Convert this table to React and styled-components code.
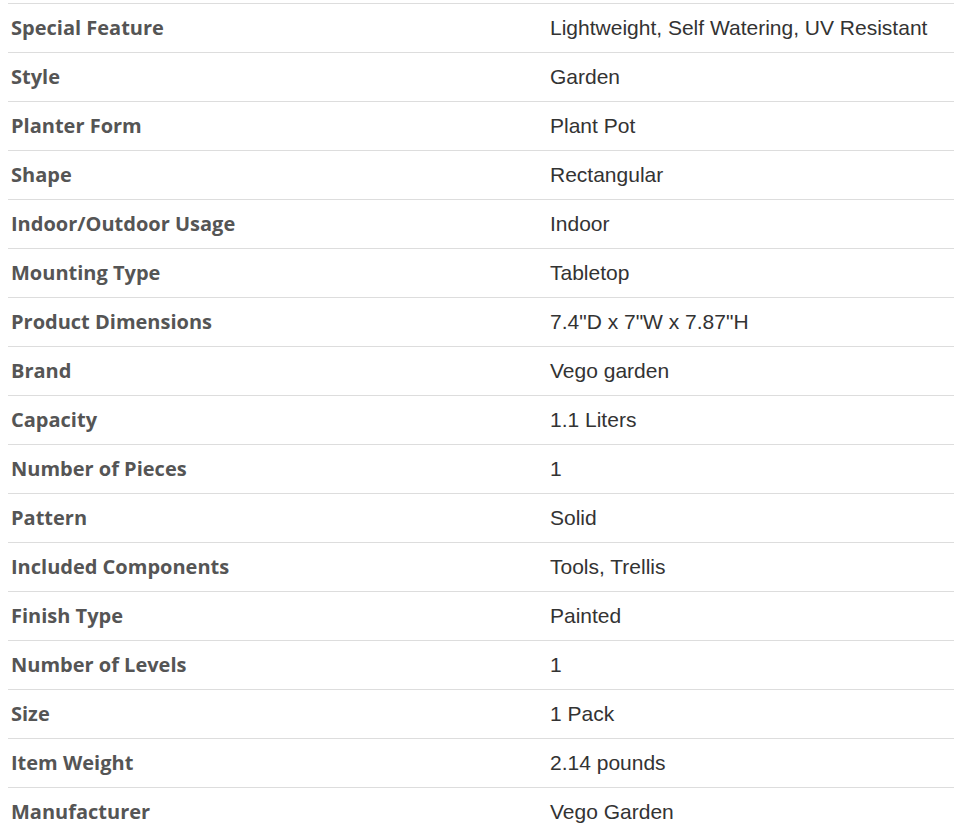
import React from "react";
import styled, { createGlobalStyle } from "styled-components";

const Global = createGlobalStyle`
  html, body { margin: 0; padding: 0; background: #fff; }
  body { padding: 3px 0 0 8px; }
`;

const Table = styled.div`
  display: grid;
  grid-template-columns: 542px 1fr;
  border-top: 1px solid #dddddd;
`;

const Row = styled.div`
  display: contents;
`;

const Cell = styled.div`
  height: 48px;
  border-bottom: 1px solid #dddddd;
  display: flex;
  align-items: center;
  box-sizing: border-box;
  height: 49px;
`;

const Label = styled(Cell)`
  padding: 0 0 2px 3px;
  font-family: "Open Sans", "Noto Sans", sans-serif;
  font-weight: 700;
  font-size: 20px;
  color: #555555;
`;

const Value = styled(Cell)`
  font-family: "Liberation Sans", Arial, sans-serif;
  font-size: 21px;
  color: #333333;
`;

const rows = [
  ["Special Feature", "Lightweight, Self Watering, UV Resistant"],
  ["Style", "Garden"],
  ["Planter Form", "Plant Pot"],
  ["Shape", "Rectangular"],
  ["Indoor/Outdoor Usage", "Indoor"],
  ["Mounting Type", "Tabletop"],
  ["Product Dimensions", "7.4\"D x 7\"W x 7.87\"H"],
  ["Brand", "Vego garden"],
  ["Capacity", "1.1 Liters"],
  ["Number of Pieces", "1"],
  ["Pattern", "Solid"],
  ["Included Components", "Tools, Trellis"],
  ["Finish Type", "Painted"],
  ["Number of Levels", "1"],
  ["Size", "1 Pack"],
  ["Item Weight", "2.14 pounds"],
  ["Manufacturer", "Vego Garden"],
];

export default function App() {
  return (
    <>
      <Global />
      <Table>
        {rows.map(([k, v]) => (
          <Row key={k}>
            <Label>{k}</Label>
            <Value>{v}</Value>
          </Row>
        ))}
      </Table>
    </>
  );
}
